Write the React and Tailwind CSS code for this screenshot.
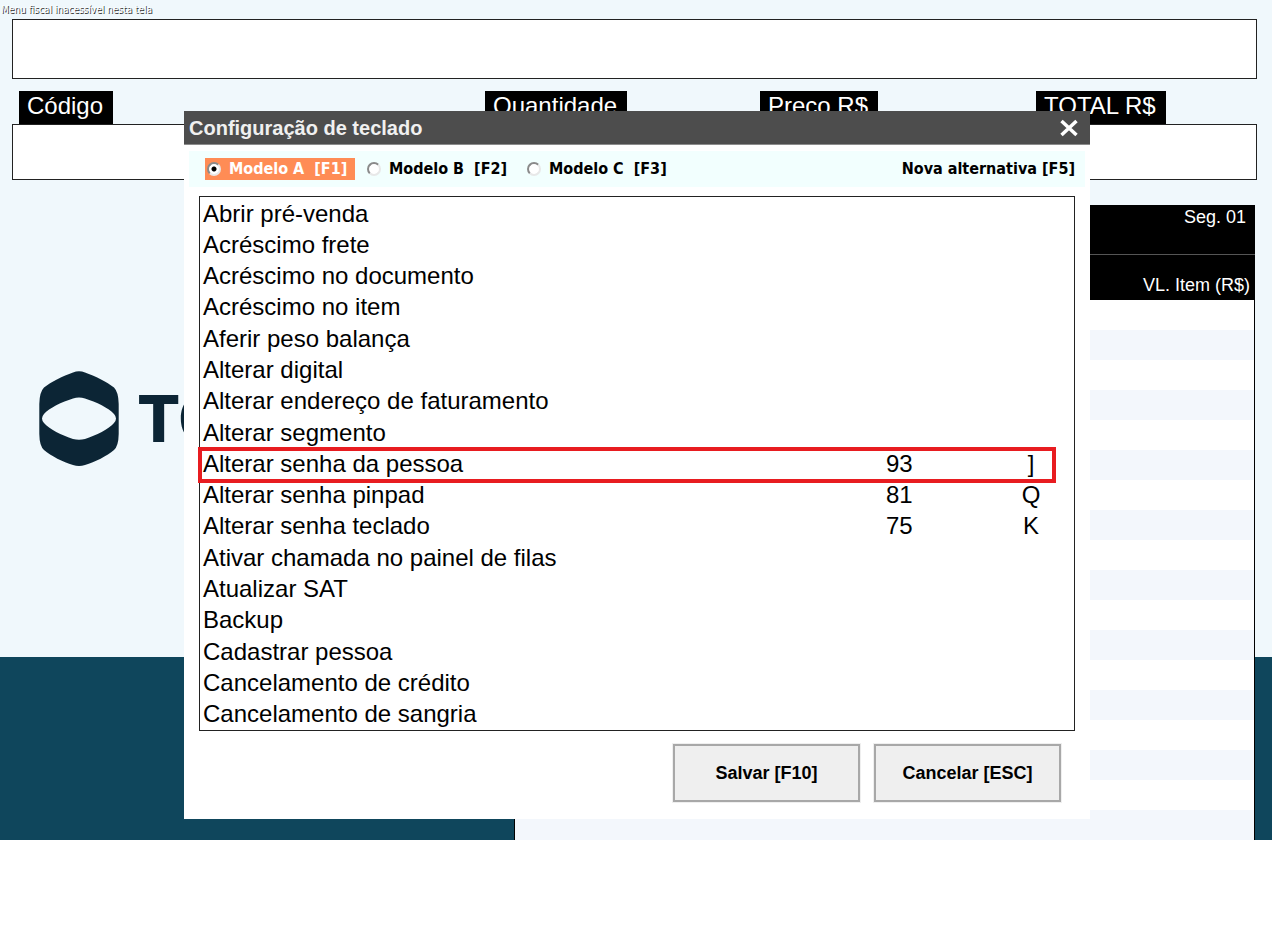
import React, { useState } from "react";

const FUNCTIONS = [
  { name: "Abrir pré-venda" },
  { name: "Acréscimo frete" },
  { name: "Acréscimo no documento" },
  { name: "Acréscimo no item" },
  { name: "Aferir peso balança" },
  { name: "Alterar digital" },
  { name: "Alterar endereço de faturamento" },
  { name: "Alterar segmento" },
  { name: "Alterar senha da pessoa", code: "93", char: "]", highlighted: true },
  { name: "Alterar senha pinpad", code: "81", char: "Q" },
  { name: "Alterar senha teclado", code: "75", char: "K" },
  { name: "Ativar chamada no painel de filas" },
  { name: "Atualizar SAT" },
  { name: "Backup" },
  { name: "Cadastrar pessoa" },
  { name: "Cancelamento de crédito" },
  { name: "Cancelamento de sangria" },
];

const MODELS = [
  { id: "A", label: "Modelo A  [F1]" },
  { id: "B", label: "Modelo B  [F2]" },
  { id: "C", label: "Modelo C  [F3]" },
];

const RECEIPT_ROWS = Array.from({ length: 18 }, (_, i) => i);

const FieldLabel = ({ htmlFor, children }) => (
  <div className="flex">
    <label
      htmlFor={htmlFor}
      className="bg-black pl-2 pr-[10px] h-[33px] text-2xl leading-[30px] text-white whitespace-nowrap"
    >
      {children}
    </label>
  </div>
);

const Logo = () => (
  <div className="flex items-center gap-[18px] self-start pl-[39px] pt-[166px] text-[#0c2535]">
    <svg width="80" height="96" viewBox="0 0 80 96" className="shrink-0">
      <path
        fill="currentColor"
        fillRule="evenodd"
        d="M34 1.500Q40 -.800 46 1.500C56 5 68 11 75 16.500Q79.500 21 79.700 33V63Q79.500 75 75 79C68 85 56 91 46 94Q40 96 34 94C24 91 12 85 5 79Q.500 75 .300 63V33Q.500 21 5 16.500C12 11 24 5 34 1.500ZM46 27.500C57 31 70 37 75 43Q79 47.500 75 52C70 58 57 64.500 46 68Q40 69.500 34 68C23 64.500 10 58 5 52Q1 47.500 5 43C10 37 23 31 34 27.500Q40 25.500 46 27.500Z"
      />
    </svg>
    <span className="w-12 overflow-hidden font-['Inter',sans-serif] text-[64px] leading-[64px] font-extrabold">
      TO
    </span>
  </div>
);

const Receipt = () => (
  <table className="w-full border-x border-black bg-white text-lg leading-6 text-white">
    <thead className="bg-black">
      <tr className="h-[49px] border-b border-[#555]">
        <th className="pr-2 text-right align-top font-normal">Seg. 01</th>
      </tr>
      <tr className="h-[46px]">
        <th className="pr-1 pb-[3px] text-right align-bottom font-normal">
          VL. Item (R$)
        </th>
      </tr>
    </thead>
    <tbody>
      {RECEIPT_ROWS.map((row) => (
        <tr key={row} className="h-[30px] even:bg-[#f3f7fc]">
          <td></td>
        </tr>
      ))}
    </tbody>
  </table>
);

const KeyboardDialog = () => {
  const [model, setModel] = useState("A");

  return (
    <div
      role="dialog"
      aria-labelledby="dialog-title"
      className="w-[906px] max-w-full bg-white text-black"
    >
      {/* Title bar */}
      <div className="flex h-[34px] items-center justify-between border-b border-[#8c8c8c] bg-[#4d4d4d] pl-[5px] pr-3">
        <h2 id="dialog-title" className="text-xl font-bold text-[#f0f0f0]">
          Configuração de teclado
        </h2>
        <button type="button" aria-label="Fechar" className="text-white">
          <svg width="18" height="18" viewBox="0 0 18 18" className="block">
            <path d="M1.500 2L16.500 16M16.500 2L1.500 16" stroke="currentColor" strokeWidth="3.500" />
          </svg>
        </button>
      </div>

      {/* Model selector */}
      <div className="mx-[5px] mt-[6px] flex h-9 items-center justify-between bg-[#f2fffe] pl-4 pr-[10px] font-['DejaVu_Sans_Condensed','DejaVu_Sans',sans-serif] text-base leading-[22px] font-bold">
        <div className="flex gap-[10px]">
          {MODELS.map((item) => (
            <label
              key={item.id}
              className={`flex w-[150px] items-center gap-2 pl-[2px] whitespace-pre ${
                model === item.id ? "bg-[#ff8c55] text-white" : ""
              }`}
            >
              <input
                type="radio"
                name="model"
                value={item.id}
                checked={model === item.id}
                onChange={() => setModel(item.id)}
                className="size-[14px] shrink-0 appearance-none rounded-full border-2 border-t-[#8a8a8a] border-r-[#e8e8e8] border-b-[#e8e8e8] border-l-[#8a8a8a] bg-white checked:bg-[radial-gradient(circle,#000_2px,#fff_3px)]"
              />
              {item.label}
            </label>
          ))}
        </div>
        <button type="button" className="whitespace-nowrap">
          Nova alternativa [F5]
        </button>
      </div>

      {/* Function list */}
      <div className="mx-[15px] mt-[9px] border border-[#222] pt-px">
        <table className="h-[532px] w-full table-fixed text-2xl leading-7">
          <colgroup>
            <col />
            <col className="w-[102px]" />
            <col className="w-[86px]" />
          </colgroup>
          <tbody>
            {FUNCTIONS.map((item) => (
              <tr key={item.name} className="relative">
                <td className="pl-[3px] whitespace-nowrap">
                  {item.name}
                  {item.highlighted && (
                    <span className="absolute -top-px -bottom-[3px] -left-[2px] right-[18px] border-4 border-[#e81c20]" />
                  )}
                </td>
                <td>{item.code}</td>
                <td className="text-center">{item.char}</td>
              </tr>
            ))}
          </tbody>
        </table>
      </div>

      {/* Actions */}
      <div className="flex justify-end gap-[14px] pt-[13px] pr-[29px] pb-[17px] text-lg font-bold">
        <button
          type="button"
          className="h-[58px] w-[187px] border-2 border-[#a8a8a8] bg-[#efefef] outline outline-[#efefef]"
        >
          Salvar [F10]
        </button>
        <button
          type="button"
          className="h-[58px] w-[187px] border-2 border-[#a8a8a8] bg-[#efefef] outline outline-[#efefef]"
        >
          Cancelar [ESC]
        </button>
      </div>
    </div>
  );
};

const App = () => {
  return (
    <div className="min-h-screen bg-white font-['Liberation_Sans',Arial,sans-serif]">
      <main className="relative bg-[linear-gradient(to_top,#0f465c_183px,#f0f8fc_183px)]">
        <p className="h-[19px] pl-px pt-[3px] font-['DejaVu_Sans_Condensed','DejaVu_Sans',sans-serif] text-[10px] leading-[14px] text-[#fafdff] [text-shadow:1px_1px_0_#333]">
          Menu fiscal inacessível nesta tela
        </p>

        {/* Sale entry */}
        <div className="ml-3 mr-[15px]">
          <input
            type="text"
            aria-label="Descrição"
            className="block h-[60px] w-full border border-[#222] bg-white px-2 text-2xl"
          />
          <div className="mt-3 grid grid-cols-[466fr_275fr_276fr_221fr] pl-[7px]">
            <FieldLabel htmlFor="item-entry">Código</FieldLabel>
            <FieldLabel htmlFor="item-entry">Quantidade</FieldLabel>
            <FieldLabel htmlFor="item-entry">Preço R$</FieldLabel>
            <FieldLabel htmlFor="item-entry">TOTAL R$</FieldLabel>
          </div>
          <input
            id="item-entry"
            type="text"
            className="block h-14 w-full border border-[#222] bg-white px-2 text-2xl"
          />
        </div>

        <div className="mt-[25px] grid grid-cols-[514fr_741fr] pr-[17px]">
          <Logo />
          <Receipt />
        </div>

        <div className="absolute inset-x-0 top-[111px] flex justify-center pl-[2px]">
          <KeyboardDialog />
        </div>
      </main>
    </div>
  );
};

export default App;
